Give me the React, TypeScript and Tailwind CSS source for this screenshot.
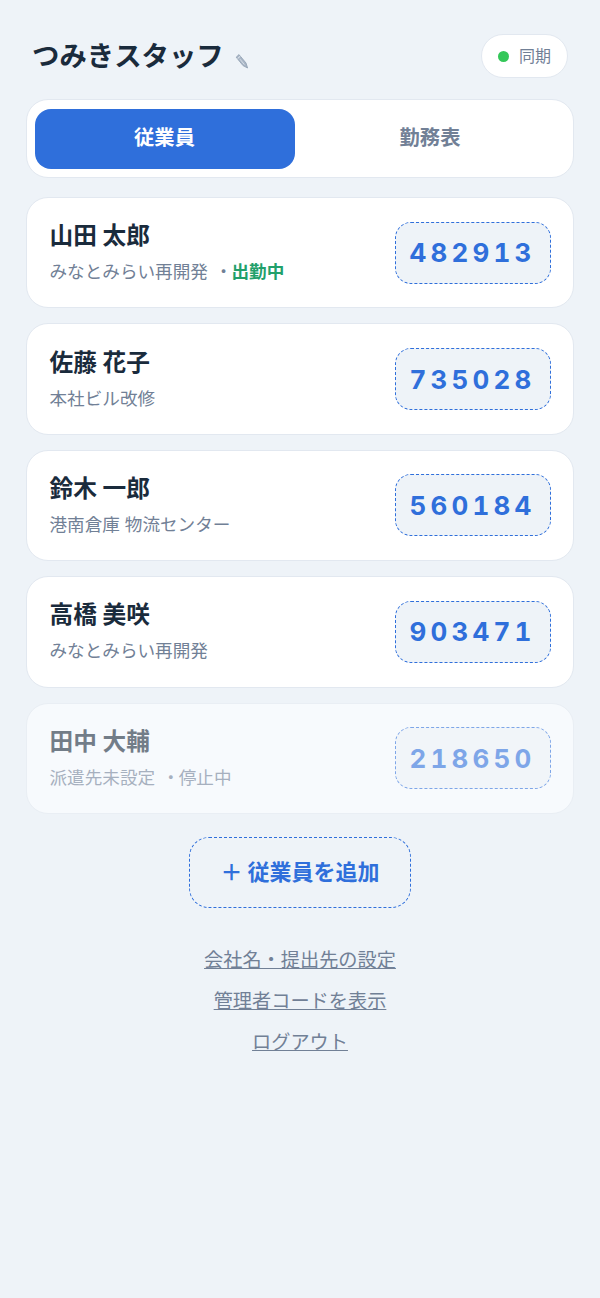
const font = 'font-["Inter","Noto_Sans_CJK_JP",sans-serif]'

type Employee = {
  name: string
  site: string
  code: string
  status?: string
  active?: boolean
  stopped?: boolean
}

const employees: Employee[] = [
  { name: '山田 太郎', site: 'みなとみらい再開発', code: '482913', status: '出勤中', active: true },
  { name: '佐藤 花子', site: '本社ビル改修', code: '735028' },
  { name: '鈴木 一郎', site: '港南倉庫 物流センター', code: '560184' },
  { name: '高橋 美咲', site: 'みなとみらい再開発', code: '903471' },
  { name: '田中 大輔', site: '派遣先未設定', code: '218650', status: '停止中', stopped: true },
]

function PencilIcon() {
  return (
    <svg viewBox="0 0 14 16" className="w-[14px] h-[16px] ml-[11px] mt-[9px]">
      <path d="M1.2 4.2 L4 1.6 L11 10 L12.6 15 L8 12.6 Z" fill="#a9b6c6" stroke="#8e9db0" strokeWidth="0.8" strokeLinejoin="round" />
      <path d="M2.6 5.6 L5.4 3.1" stroke="#eef3f8" strokeWidth="0.9" />
      <path d="M5 6.2 L9.4 11.6" stroke="#dfe6ee" strokeWidth="0.8" />
    </svg>
  )
}

function EmployeeCard({ employee }: { employee: Employee }) {
  return (
    <div
      className={
        employee.stopped
          ? 'flex items-center justify-between h-[111.4px] px-[22.5px] rounded-[22px] border-[1.5px] border-[#e9eef4] bg-[#f7fafd]'
          : 'flex items-center justify-between h-[111.4px] px-[22.5px] rounded-[22px] border-[1.5px] border-[#e2e8f0] bg-white'
      }
    >
      <div className={employee.stopped ? 'opacity-60' : ''}>
        <div className="text-[23.7px] leading-[32px] font-bold text-[#1a2b3c]">{employee.name}</div>
        <div className="mt-[7px] text-[17.6px] leading-[26px] text-[#718096]">
          {employee.site}
          {employee.status && (
            <>
              <span className="ml-[7px]">・</span>
              <span className={employee.active ? 'font-bold text-[#22a06b] -ml-[1px]' : '-ml-[1px]'}>
                {employee.status}
              </span>
            </>
          )}
        </div>
      </div>
      <div className={employee.stopped ? 'opacity-60' : ''}>
        <div className="flex items-center justify-center w-[156px] h-[62px] rounded-[16px] border-[1.5px] border-dashed border-[#2f6fdb] bg-[#eef3f8] text-[26px] font-bold tabular-nums tracking-[4.2px] text-[#2f6fdb]">
          {employee.code}
        </div>
      </div>
    </div>
  )
}

export default function App() {
  return (
    <div className={`${font} min-h-[1298px] bg-[#eef3f8] px-[26px] pt-[34px]`}>
      <header className="flex items-center justify-between pl-[6px] pr-[6px] h-[44px]">
        <div className="flex items-center">
          <h1 className="text-[27.4px] leading-[44px] font-bold text-[#1a2b3c]">つみきスタッフ</h1>
          <PencilIcon />
        </div>
        <div className="flex items-center gap-[10px] h-[44px] pl-[16px] pr-[16px] rounded-full border-[1.5px] border-[#e2e8f0] bg-white">
          <span className="w-[11px] h-[11px] rounded-full bg-[#34c759]" />
          <span className="text-[16px] text-[#718096]">同期</span>
        </div>
      </header>

      <nav className="flex mt-[21px] h-[79px] px-[7.5px] py-[8.5px] rounded-[22px] border-[1.5px] border-[#e2e8f0] bg-white">
        <button className="w-[260px] rounded-[16px] bg-[#2f6fdb] text-[20.3px] font-bold text-white">従業員</button>
        <button className="flex-1 text-[20.3px] font-bold text-[#718096]">勤務表</button>
      </nav>

      <main className="flex flex-col gap-[15px] mt-[19px]">
        {employees.map((employee) => (
          <EmployeeCard key={employee.code} employee={employee} />
        ))}
      </main>

      <div className="flex justify-center mt-[23px]">
        <button className="flex items-center justify-center w-[222px] h-[71px] rounded-[20px] border-[1.5px] border-dashed border-[#2f6fdb] text-[22px] font-bold text-[#2f6fdb]">
          ＋ 従業員を追加
        </button>
      </div>

      <div className="flex flex-col items-center gap-[11px] mt-[37px] text-[19.2px] leading-[30px] text-[#718096]">
        <a className="underline">会社名・提出先の設定</a>
        <a className="underline">管理者コードを表示</a>
        <a className="underline">ログアウト</a>
      </div>
    </div>
  )
}
